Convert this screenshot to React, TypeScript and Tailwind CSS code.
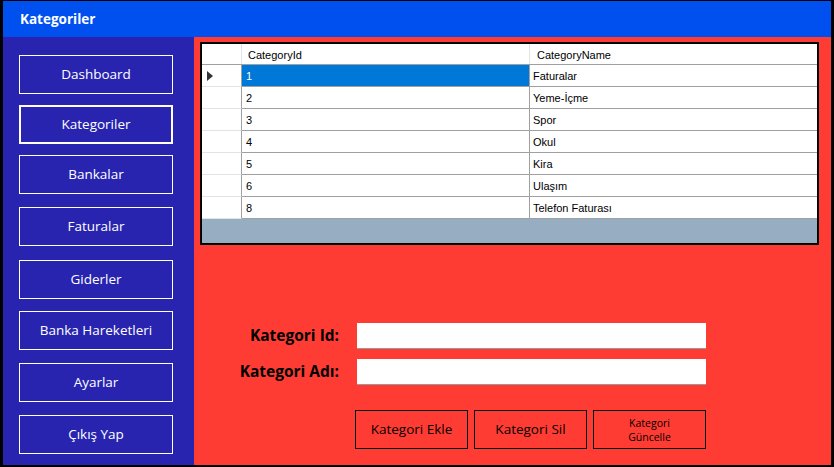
import React from 'react';

const menu = [
  { label: 'Dashboard', mt: 'mt-0' },
  { label: 'Kategoriler', mt: 'mt-[11px]' },
  { label: 'Bankalar', mt: 'mt-[11px]' },
  { label: 'Faturalar', mt: 'mt-[13px]' },
  { label: 'Giderler', mt: 'mt-[14px]' },
  { label: 'Banka Hareketleri', mt: 'mt-[12px]' },
  { label: 'Ayarlar', mt: 'mt-[13px]' },
  { label: 'Çıkış Yap', mt: 'mt-[13px]' },
];

const rows = [
  { id: '1', name: 'Faturalar' },
  { id: '2', name: 'Yeme-İçme' },
  { id: '3', name: 'Spor' },
  { id: '4', name: 'Okul' },
  { id: '5', name: 'Kira' },
  { id: '6', name: 'Ulaşım' },
  { id: '8', name: 'Telefon Faturası' },
];

const ui = { fontFamily: '"Open Sans", "Noto Sans", sans-serif' };
const grid = { fontFamily: '"Liberation Sans", Arial, sans-serif' };

export default function App() {
  return (
    <div className="w-[834px] h-[467px] flex flex-col border-black border-t border-l-[3px] border-r-[3px] border-b-2 overflow-hidden" style={ui}>
      {/* title bar */}
      <div className="h-[36px] shrink-0 bg-[#0050ef] flex items-center pl-[17px]">
        <span className="text-white font-bold text-[13.5px]">Kategoriler</span>
      </div>

      <div className="flex flex-1 min-h-0">
        {/* side menu */}
        <div className="w-[191px] shrink-0 bg-[#2824b0] pl-[16px] pt-[18px] flex flex-col">
          {menu.map((m) => (
            <button
              key={m.label}
              className={`${m.mt} w-[154px] h-[39px] shrink-0 flex items-center justify-center text-white text-[13.5px] border-white ${m.label === 'Kategoriler' ? 'border-2' : 'border'}`}
            >
              {m.label}
            </button>
          ))}
        </div>

        {/* content */}
        <div className="flex-1 bg-[#ff3c33] pl-[6px] pt-[5px] flex flex-col">
          {/* data grid */}
          <div className="w-[619px] h-[203px] border-2 border-black bg-[#97aec2] flex flex-col text-[11px] text-black" style={grid}>
            <div className="flex h-[21px] bg-white border-b border-[#a0a0a0]">
              <div className="w-[40px] border-r border-[#e3e3e3]" />
              <div className="w-[288px] border-r border-[#e3e3e3] pl-[6px] pt-[2px] flex items-center">CategoryId</div>
              <div className="flex-1 pl-[7px] pt-[2px] flex items-center">CategoryName</div>
            </div>
            {rows.map((r, i) => (
              <div key={r.id} className="flex h-[22px] bg-white">
                <div className="w-[40px] border-r border-[#a0a0a0] border-b border-b-[#e3e3e3] flex items-center pl-[5px]">
                  {i === 0 && (
                    <svg width="6" height="10" viewBox="0 0 6 10">
                      <path d="M0 0 L6 5 L0 10 Z" fill="#333" />
                    </svg>
                  )}
                </div>
                <div className={`w-[288px] border-r border-b border-[#a0a0a0] pl-[4px] pt-[1px] flex items-center ${i === 0 ? 'bg-[#0078d7] text-white' : ''}`}>{r.id}</div>
                <div className="flex-1 border-b border-[#a0a0a0] pl-[3px] pt-[1px] flex items-center">{r.name}</div>
              </div>
            ))}
          </div>

          {/* form */}
          <div className="mt-[78px] flex flex-col gap-[10px]">
            <div className="flex items-center">
              <label className="w-[139px] text-right text-[15.5px] font-bold text-black">Kategori Id:</label>
              <input className="ml-[18px] w-[349px] h-[26px] bg-white border-b border-[#9a9a9a] outline-none" />
            </div>
            <div className="flex items-center">
              <label className="w-[139px] text-right text-[15.5px] font-bold text-black">Kategori Adı:</label>
              <input className="ml-[18px] w-[349px] h-[26px] bg-white border-b border-[#9a9a9a] outline-none" />
            </div>
          </div>

          <div className="mt-[25px] ml-[155px] flex gap-[6px]">
            <button className="w-[113px] h-[39px] border border-black text-black text-[13.5px] flex items-center justify-center">Kategori Ekle</button>
            <button className="w-[113px] h-[39px] border border-black text-black text-[13.5px] flex items-center justify-center">Kategori Sil</button>
            <button className="w-[113px] h-[39px] border border-black text-black text-[10.5px] leading-[14px] flex items-center justify-center text-center">
              Kategori<br />Güncelle
            </button>
          </div>
        </div>
      </div>
    </div>
  );
}
